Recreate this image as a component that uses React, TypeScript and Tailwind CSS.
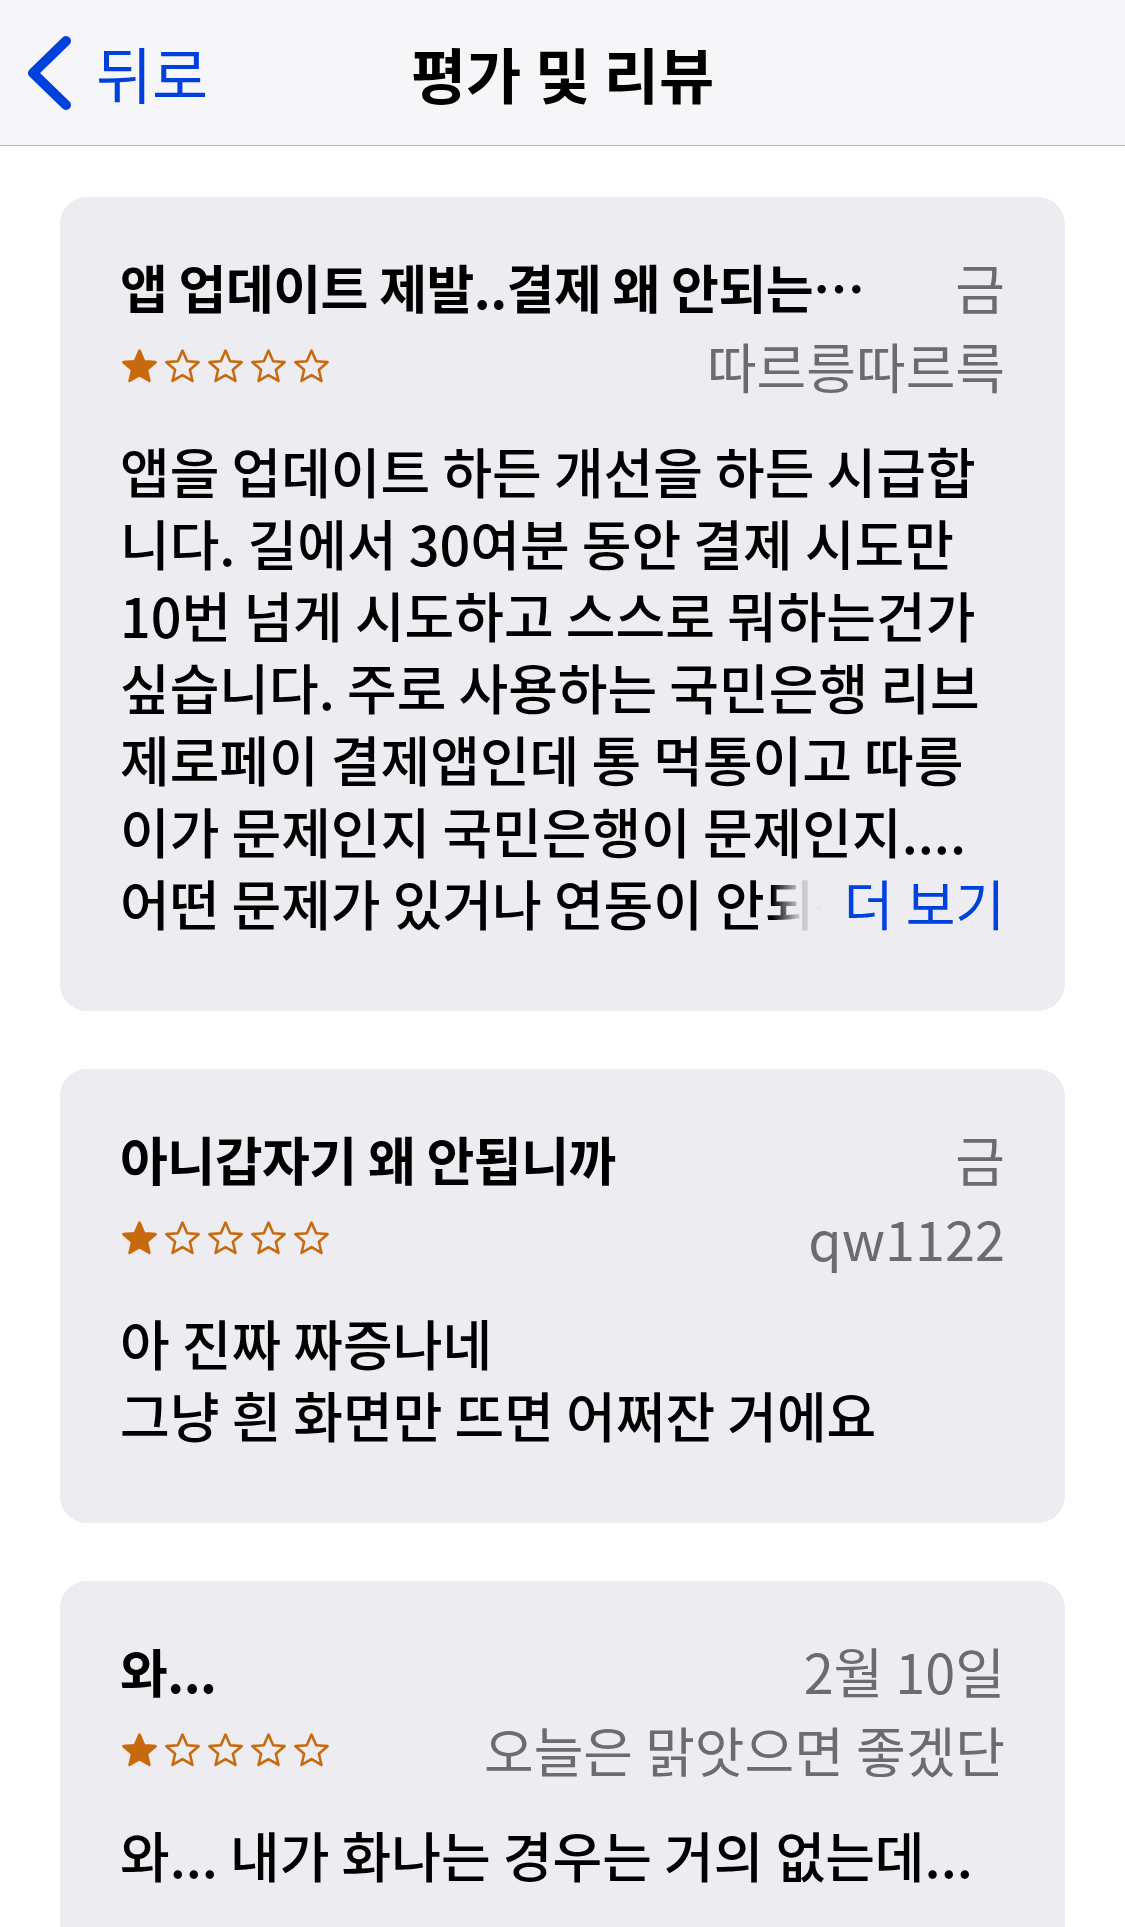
import React from "react"

const FONT = { fontFamily: '"Noto Sans CJK KR", "Noto Sans", sans-serif' }

type Review = {
  title: string
  date: string
  author: string
  lines: string[]
  more?: boolean
}

const reviews: Review[] = [
  {
    title: "앱 업데이트 제발..결제 왜 안되는…",
    date: "금",
    author: "따르릉따르륵",
    lines: [
      "앱을 업데이트 하든 개선을 하든 시급합",
      "니다. 길에서 30여분 동안 결제 시도만",
      "10번 넘게 시도하고 스스로 뭐하는건가",
      "싶습니다. 주로 사용하는 국민은행 리브",
      "제로페이 결제앱인데 통 먹통이고 따릉",
      "이가 문제인지 국민은행이 문제인지....",
      "어떤 문제가 있거나 연동이 안되는건지 모르겠지만",
    ],
    more: true,
  },
  {
    title: "아니갑자기 왜 안됩니까",
    date: "금",
    author: "qw1122",
    lines: ["아 진짜 짜증나네", "그냥 흰 화면만 뜨면 어쩌잔 거에요"],
  },
  {
    title: "와...",
    date: "2월 10일",
    author: "오늘은 맑앗으면 좋겠단",
    lines: ["와... 내가 화나는 경우는 거의 없는데..."],
  },
]

function Star({ filled }: { filled: boolean }) {
  return (
    <svg width="39" height="37" viewBox="0 0 24 23">
      <path
        d="M12 1.6l2.9 6.6 7.1.6-5.4 4.7 1.6 7-6.2-3.7-6.2 3.7 1.6-7L2 8.8l7.1-.6z"
        fill={filled ? "#c9690d" : "none"}
        stroke="#c9690d"
        strokeWidth="1.6"
        strokeLinejoin="round"
      />
    </svg>
  )
}

function ReviewCard({ review }: { review: Review }) {
  const last = review.lines.length - 1
  return (
    <div className="rounded-[27px] bg-[#ececf1] px-[60px] pt-[54px] pb-[72px]">
      <div className="flex h-[72px] items-center gap-[40px]">
        <div className="min-w-0 flex-1 truncate text-[52px] font-bold leading-[72px] tracking-[-0.01em] text-black">
          {review.title}
        </div>
        <div className="shrink-0 text-[54px] leading-[72px] text-[#6c6c70]">{review.date}</div>
      </div>
      <div className="mt-[7px] flex h-[72px] items-center justify-between">
        <div className="flex gap-[4px]">
          {[0, 1, 2, 3, 4].map((i) => (
            <Star key={i} filled={i === 0} />
          ))}
        </div>
        <div className="text-[54px] leading-[72px] text-[#6c6c70]">{review.author}</div>
      </div>
      <div className="mt-[33px] text-[54px] font-medium leading-[72px] text-black">
        {review.lines.map((line, i) =>
          review.more && i === last ? (
            <div key={i} className="relative overflow-hidden whitespace-nowrap">
              {line}
              <div className="absolute inset-y-0 right-0 flex">
                <div className="w-[50px] bg-gradient-to-r from-[#ececf1]/0 via-[#ececf1]/80 to-[#ececf1]" />
                <span className="bg-[#ececf1] pl-[22px] font-normal text-[#0040dd]">더 보기</span>
              </div>
            </div>
          ) : (
            <div key={i} className="whitespace-nowrap">
              {line}
            </div>
          )
        )}
      </div>
    </div>
  )
}

export default function App() {
  return (
    <div className="h-[1927px] w-[1125px] overflow-hidden bg-white" style={FONT}>
      <header className="relative flex h-[146px] items-center border-b border-[#b4b4b8] bg-[#f6f6f8]">
        <div className="flex items-center pl-[22px]">
          <svg width="56" height="80" viewBox="0 0 56 80">
            <polyline
              points="44,8 11,40 44,72"
              fill="none"
              stroke="#0040dd"
              strokeWidth="10"
              strokeLinecap="round"
              strokeLinejoin="round"
            />
          </svg>
          <span className="ml-[18px] text-[61px] leading-none text-[#0040dd]">뒤로</span>
        </div>
        <div className="absolute inset-x-0 top-0 flex h-full items-center justify-center">
          <span className="text-[60px] font-bold leading-none text-black">평가 및 리뷰</span>
        </div>
      </header>
      <main className="flex flex-col gap-[58px] px-[60px] pt-[51px]">
        {reviews.map((r, i) => (
          <ReviewCard key={i} review={r} />
        ))}
      </main>
    </div>
  )
}
